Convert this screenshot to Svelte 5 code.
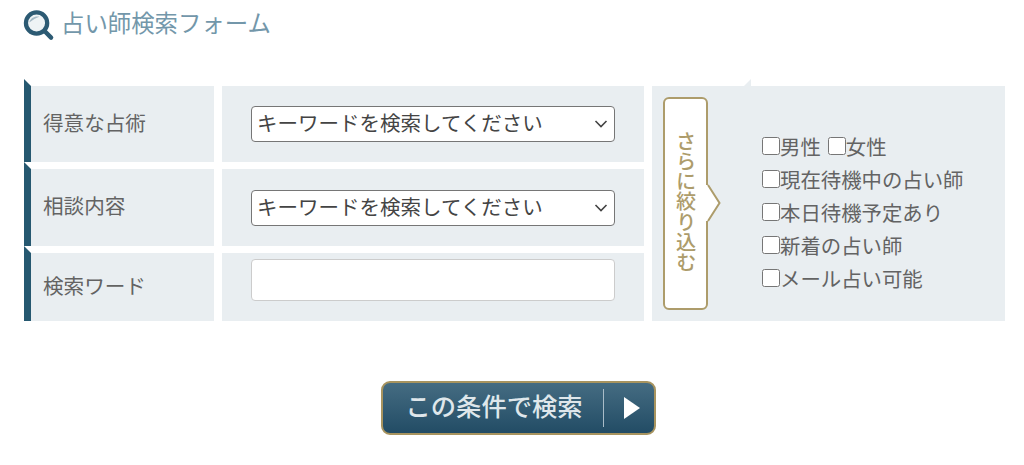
<script>
  const filters = [
    [{ label: '男性' }, { label: '女性' }],
    [{ label: '現在待機中の占い師' }],
    [{ label: '本日待機予定あり' }],
    [{ label: '新着の占い師' }],
    [{ label: 'メール占い可能' }]
  ]
  const placeholder = 'キーワードを検索してください'
</script>

<main class="page">
  <h2 class="title">
    <svg class="title__icon" viewBox="0 0 30 30" aria-hidden="true">
      <circle cx="13" cy="12.5" r="11" fill="#eef3f5" stroke="#2c5a73" stroke-width="4.4" />
      <path d="M5.5 12 C6.5 7.5 11 5 16 6 C12.5 7.5 9 9 5.5 12 Z" fill="#a5bac6" />
      <path d="M21.5 21 L28 27.5" stroke="#2c5a73" stroke-width="4.6" stroke-linecap="round" />
    </svg>
    <span class="title__text">占い師検索フォーム</span>
  </h2>

  <form class="form" on:submit|preventDefault>
    <div class="label"><span>得意な占術</span></div>
    <div class="field">
      <select class="select"><option>{placeholder}</option></select>
    </div>

    <div class="extra">
      <div class="tab">
        <span class="tab__text">さらに絞り込む</span>
        <svg class="tab__arrow" viewBox="0 0 15 36" aria-hidden="true">
          <path d="M0 0 H2 L13.5 18 L2 36 H0 Z" fill="#fff" />
          <path d="M2 0 L13.5 18 L2 36" fill="none" stroke="#ad9c6b" stroke-width="2" />
        </svg>
      </div>
      <div class="checks">
        {#each filters as row}
          <div class="checks__row">
            {#each row as item}
              <label class="check"><input type="checkbox" />{item.label}</label>
            {/each}
          </div>
        {/each}
      </div>
    </div>

    <div class="label"><span>相談内容</span></div>
    <div class="field">
      <select class="select"><option>{placeholder}</option></select>
    </div>

    <div class="label"><span>検索ワード</span></div>
    <div class="field">
      <input class="text" type="text" />
    </div>
  </form>

  <div class="actions">
    <button class="submit" type="submit">
      <span class="submit__text"><span>この条件で検索</span></span>
      <span class="submit__arrow"></span>
    </button>
  </div>
</main>

<style>
  :global(body) {
    margin: 0;
    background: #fff;
  }

  .page {
    height: 465px;
    padding: 11px 19px 0 24px;
    box-sizing: border-box;
    font-family: "Noto Sans CJK JP", "Noto Sans", sans-serif;
    color: #636363;
  }

  .title {
    display: flex;
    align-items: center;
    gap: 8px;
    height: 29px;
    margin: 0;
    font-size: 23.4px;
    font-weight: 400;
    line-height: 29px;
    color: #7397aa;
  }

  .title__icon {
    width: 29px;
    height: 29px;
    flex: none;
    overflow: visible;
  }

  .title__text {
    padding-bottom: 6px;
  }

  .form {
    display: grid;
    grid-template-columns: 190px 422px 353px;
    grid-template-rows: 76px 77px 68px;
    gap: 7px 8px;
    margin-top: 46px;
  }

  .label {
    position: relative;
    display: flex;
    align-items: center;
    padding: 0 0 5px 12px;
    border-left: 7px solid #265870;
    background: #e9eef1;
    font-size: 20.6px;
  }

  .label::before {
    content: '';
    position: absolute;
    left: -7px;
    top: -7px;
    border-style: solid;
    border-width: 7px 0 0 7px;
    border-color: transparent transparent transparent #265870;
  }

  .field {
    display: flex;
    align-items: center;
    padding-left: 29px;
    background: #e9eef1;
  }

  .select {
    appearance: none;
    width: 364px;
    height: 36px;
    padding: 0 24px 4px 5px;
    border: 1px solid #767676;
    border-radius: 4px;
    background: #fff url("data:image/svg+xml,%3Csvg xmlns='http://www.w3.org/2000/svg' width='14' height='8' viewBox='0 0 14 8'%3E%3Cpath d='M1.5 1 L7 6.5 L12.5 1' fill='none' stroke='%23444' stroke-width='1.6'/%3E%3C/svg%3E") no-repeat right 6px center;
    font: inherit;
    font-size: 20.5px;
    color: #444;
  }

  .text {
    width: 364px;
    height: 42px;
    box-sizing: border-box;
    border: 1px solid #ccc;
    border-radius: 4px;
    background: #fff;
    margin-bottom: 14px;
  }

  .extra {
    position: relative;
    grid-column: 3;
    grid-row: 1 / span 3;
    display: flex;
    align-items: center;
    background: #e9eef1;
  }

  .extra::before {
    content: '';
    position: absolute;
    left: 92px;
    top: -7px;
    border-style: solid;
    border-width: 0 0 7px 7px;
    border-color: transparent transparent #e9eef1 transparent;
  }

  .tab {
    position: relative;
    display: flex;
    align-items: center;
    justify-content: center;
    width: 45px;
    height: 213px;
    box-sizing: border-box;
    margin-left: 11px;
    border: 2px solid #ad9c6b;
    border-radius: 6px;
    background: #fff;
  }

  .tab__text {
    writing-mode: vertical-rl;
    font-size: 20.2px;
    line-height: 1;
    color: #ad9c6b;
    font-weight: 500;
    padding-bottom: 3px;
  }

  .tab__arrow {
    position: absolute;
    left: 41px;
    top: 86px;
    width: 15px;
    height: 36px;
    overflow: visible;
  }

  .checks {
    margin: 18px 0 0 54px;
    font-size: 20.4px;
  }

  .checks__row {
    display: flex;
    gap: 7px;
    height: 33px;
    align-items: center;
  }

  .check {
    display: flex;
    align-items: center;
    line-height: 33px;
    white-space: nowrap;
  }

  .check input {
    width: 18px;
    height: 18px;
    margin: 0;
    transform: translateY(-1px);
  }

  .actions {
    display: flex;
    justify-content: center;
    margin-top: 60px;
    padding-left: 7px;
  }

  .submit {
    display: flex;
    align-items: center;
    width: 275px;
    height: 54px;
    padding: 0;
    box-sizing: border-box;
    border: 2px solid #a8945f;
    border-radius: 9px;
    background: linear-gradient(#456c82, #224c65);
    color: #dfe7eb;
    font: inherit;
    cursor: pointer;
  }

  .submit__text {
    width: 221px;
    padding-left: 23px;
    box-sizing: border-box;
    font-size: 25.3px;
    font-weight: 500;
    line-height: 38px;
    text-align: left;
    border-right: 1px solid #a9bcc8;
  }

  .submit__text span {
    position: relative;
    top: -3px;
  }

  .submit__arrow {
    margin-left: 20px;
    border-style: solid;
    border-width: 11px 0 11px 16px;
    border-color: transparent transparent transparent #fff;
  }
</style>
